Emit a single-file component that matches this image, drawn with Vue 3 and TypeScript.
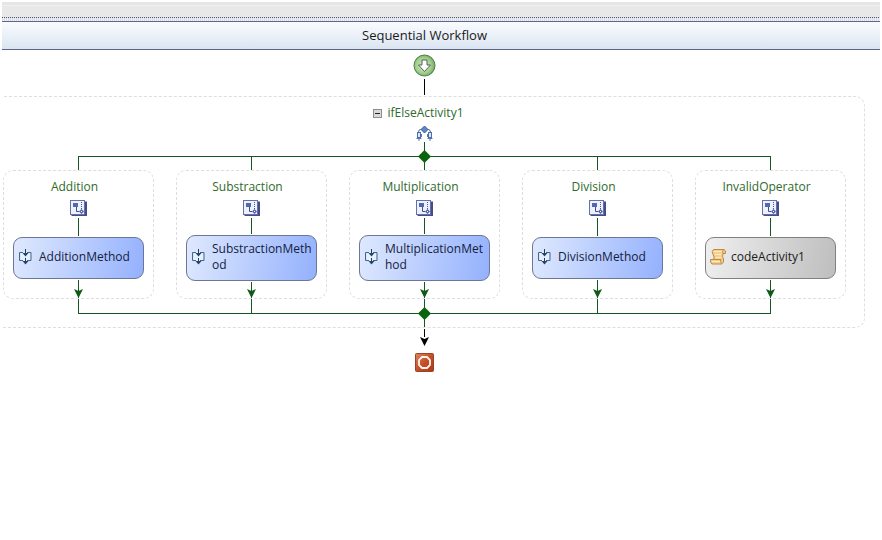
<script setup lang="ts">
import { ref } from 'vue'

interface Branch {
  title: string
  activity: string
  kind: 'method' | 'code'
}

const branches: Branch[] = [
  { title: 'Addition', activity: 'AdditionMethod', kind: 'method' },
  { title: 'Substraction', activity: 'SubstractionMethod', kind: 'method' },
  { title: 'Multiplication', activity: 'MultiplicationMethod', kind: 'method' },
  { title: 'Division', activity: 'DivisionMethod', kind: 'method' },
  { title: 'InvalidOperator', activity: 'codeActivity1', kind: 'code' },
]

const expanded = ref(true)
</script>

<template>
  <div class="designer">
    <div class="strip"></div>
    <div class="perforation"></div>
    <header class="title-bar">
      <h1>Sequential Workflow</h1>
    </header>

    <main class="canvas">
      <svg class="start" width="23" height="23" viewBox="0 0 23 23">
        <defs>
          <radialGradient id="startFill" cx="0.45" cy="0.5" r="0.6">
            <stop offset="0" stop-color="#d2edc0" />
            <stop offset="0.6" stop-color="#a3d08e" />
            <stop offset="1" stop-color="#67985a" />
          </radialGradient>
        </defs>
        <circle cx="11.5" cy="11.5" r="10.5" fill="url(#startFill)" stroke="#4f7d45" />
        <path d="M9 6h5v5h3.5l-6 6.5-6-6.5H9z" fill="#fff" stroke="#55605a" />
      </svg>
      <div class="line entry"></div>

      <section class="frame">
        <div class="label frame-label">
          <button
            type="button"
            class="toggle"
            aria-label="Collapse"
            :aria-expanded="expanded"
            @click="expanded = !expanded"
          >
            <svg width="9" height="9" viewBox="0 0 9 9">
              <rect x="0.5" y="0.5" width="8" height="8" fill="#d9d9d9" stroke="#8c8c8c" />
              <path d="M2 4.5h5" stroke="#222" />
              <path v-if="!expanded" d="M4.5 2v5" stroke="#222" />
            </svg>
          </button>
          <span>ifElseActivity1</span>
        </div>
        <svg class="decision" width="17" height="16" viewBox="0 0 17 16">
          <path d="M6 3.5H4.5q-2 0-2 3M11 3.5h1.5q2 0 2 3" fill="none" stroke="#4a6396" />
          <path d="M8.500 0l3.500 3.500L8.500 7 5 3.500z" fill="#5f86cc" stroke="#3d5c9c" />
          <rect x="1.500" y="6.500" width="3" height="5" fill="#dfe8fa" stroke="#4d6cab" />
          <rect x="12.500" y="6.500" width="3" height="5" fill="#dfe8fa" stroke="#4d6cab" />
          <path d="M3 12v3M14 12v3M0.500 12.500h5M11.500 12.500h5M5.500 8v3M11.500 8v3" stroke="#5f78ab" />
        </svg>
        <div class="line stem"></div>
        <div class="rail">
          <svg class="diamond" width="13" height="13" viewBox="0 0 13 13">
            <path d="M6.500 0l6.500 6.500-6.500 6.500L0 6.500z" fill="#0b640e" />
          </svg>
        </div>

        <div class="branches">
          <div v-for="branch in branches" :key="branch.title" class="branch">
            <div class="line lead"></div>
            <article class="card">
              <h2 class="label">{{ branch.title }}</h2>
              <svg class="branch-icon" width="17" height="16" viewBox="0 0 17 16">
                <path d="M1.500 15h14.500V1.500" fill="none" stroke="#444c8c" stroke-width="2" />
                <rect x="0.500" y="0.500" width="14" height="14" fill="#eef1fc" stroke="#6470ac" />
                <rect x="3" y="3" width="5" height="4" fill="#5069ae" />
                <path d="M6.500 7v4.500H9" fill="none" stroke="#3f5088" />
                <path d="M11.500 2v7" stroke="#46568e" stroke-dasharray="1 1" />
                <path d="M11.500 9l2.500 2.500-2.500 2.500L9 11.500z" fill="#5366a3" />
                <path d="M11 11.500h1" stroke="#fff" />
              </svg>
              <div class="flow">
                <div class="line grow"></div>
                <div class="activity" :class="branch.kind">
                  <svg v-if="branch.kind === 'method'" class="glyph" width="16" height="16" viewBox="0 0 16 16">
                    <path d="M3 3h9v9H3z" fill="#eef8ff" opacity="0.6" />
                    <path d="M5 3.500H1.500v8H5M9 3.500h4v8H9" fill="none" stroke="#46668a" />
                    <path d="M7.500 0v7M7.500 9v6" stroke="#213f5e" />
                    <path d="M4.500 4h6l-3 3.500zM4.500 12h6l-3 3.500z" fill="#234666" />
                  </svg>
                  <svg v-else class="glyph" width="16" height="16" viewBox="0 0 16 16">
                    <path
                      d="M3.500 0.500H14q2 0.500 1.500 4h-2.500q-1 3 0.500 5.500 1 4-2 5H2Q0 13.500 0.500 10.500h3Q5 8 3 5.500 1 2 3.500 0.500z"
                      fill="#f4cf8d"
                      stroke="#bd8a48"
                    />
                    <path d="M4 2.500h8M2 12.500h8M5 5.500h6M6 8.500h5" stroke="#ffe9bd" fill="none" />
                    <path d="M13 4.500q-1-2.500 0.500-4M3.500 10.500h7.500q-1 2 0.500 4" fill="none" stroke="#bd8a48" />
                  </svg>
                  <span class="name">{{ branch.activity }}</span>
                </div>
                <div class="line grow"></div>
                <svg class="head" width="9" height="9" viewBox="0 0 9 9">
                  <path d="M0 0l4.500 2L9 0 4.500 9z" fill="#0e5a16" />
                </svg>
              </div>
            </article>
            <div class="line tail"></div>
          </div>
        </div>

        <div class="rail">
          <svg class="diamond" width="13" height="13" viewBox="0 0 13 13">
            <path d="M6.500 0l6.500 6.500-6.500 6.500L0 6.500z" fill="#0b640e" />
          </svg>
        </div>
        <div class="line exit"></div>
      </section>

      <div class="line final"></div>
      <svg class="head" width="9" height="9" viewBox="0 0 9 9">
        <path d="M0 0l4.500 2L9 0 4.500 9z" fill="#000" />
      </svg>
      <svg class="stop" width="19" height="19" viewBox="0 0 19 19">
        <defs>
          <linearGradient id="stopFill" x1="0" y1="0" x2="1" y2="1">
            <stop offset="0" stop-color="#d98462" />
            <stop offset="0.5" stop-color="#c4502a" />
            <stop offset="1" stop-color="#a83a18" />
          </linearGradient>
        </defs>
        <rect x="0.5" y="0.5" width="18" height="18" rx="1" fill="url(#stopFill)" stroke="#9c4326" />
        <path d="M7 4h5l3 3v5l-3 3H7l-3-3V7z" fill="none" stroke="#fff3ea" stroke-width="1.8" />
      </svg>
    </main>
  </div>
</template>

<style>
body {
  margin: 0;
  background: #fff;
}
</style>

<style scoped>
.designer {
  min-height: 100vh;
  box-sizing: border-box;
  padding: 2px 2px 0;
  font-family: 'Open Sans', 'Noto Sans', sans-serif;
  font-size: 12px;
  line-height: 16px;
  color: #1a1a1a;
}

.strip {
  height: 15px;
  background: linear-gradient(#e6e6e6 3px, #efefef 3px, #efefef 4px, #e8e8e8 4px);
}

.perforation {
  height: 4px;
  background:
    repeating-linear-gradient(90deg, #50566a 0 1px, #e4e6ea 1px 2px) top / 100% 1px no-repeat,
    repeating-linear-gradient(90deg, #d8dcea 0 1px, #eff1f8 1px 2px);
}

.title-bar {
  display: flex;
  justify-content: center;
  padding: 5px 33px 6px 0;
  border-top: 1px solid #5d6688;
  border-bottom: 1px solid #5d6688;
  background: linear-gradient(#fafcfe, #dae5f2);
}

h1,
h2 {
  margin: 0;
  font-weight: 400;
}

h1 {
  font-size: 13px;
  line-height: 16px;
}

.canvas {
  display: flex;
  flex-direction: column;
  align-items: center;
  padding: 4px 33px 16px 0;
  overflow: hidden;
}

.start,
.stop,
.decision,
.branch-icon,
.head,
.glyph {
  display: block;
  flex: none;
}

.line {
  width: 1px;
  flex: none;
  background: #175423;
}

.entry {
  height: 16px;
  margin: 2px 0 1px;
  background: #000;
}

.frame {
  display: flex;
  flex-direction: column;
  align-items: center;
  flex: none;
  padding: 8px 18px 0;
  border: 1px dashed #dedede;
  border-radius: 10px;
}

.label {
  padding-right: 8px;
  font-size: 12px;
  line-height: 16px;
  color: #2f6a2c;
}

.frame-label {
  display: flex;
  align-items: center;
  gap: 5px;
  padding-right: 12px;
  margin-bottom: 5px;
}

.toggle {
  display: block;
  padding: 0;
  border: 0;
  background: none;
  line-height: 0;
}

.stem {
  height: 14px;
}

.rail {
  position: relative;
  align-self: stretch;
  height: 1px;
  margin: 0 75px;
  background: #175423;
}

.diamond {
  position: absolute;
  top: -6px;
  left: calc(50% - 6.5px);
}

.branches {
  display: flex;
  gap: 22px;
}

.branch {
  display: flex;
  flex-direction: column;
  align-items: center;
}

.lead {
  height: 13px;
}

.card {
  display: flex;
  flex-direction: column;
  align-items: center;
  box-sizing: border-box;
  width: 151px;
  padding: 8px 9px 0;
  border: 1px dashed #dedede;
  border-radius: 10px;
}

.branch-icon {
  margin: 5px 0 2px;
}

.flow {
  display: flex;
  flex-direction: column;
  align-items: center;
  width: 100%;
  height: 80px;
}

.flow .head {
  margin-top: -9px;
}

.grow {
  flex: 1 1 0;
}

.activity {
  display: flex;
  align-items: center;
  gap: 5px;
  box-sizing: border-box;
  width: 100%;
  min-height: 42px;
  margin: 1px 0;
  padding: 5px 2px 7px 4px;
  border: 1px solid #6c7796;
  border-radius: 9px;
}

.method {
  background: linear-gradient(100deg, #dfe9fe, #94b1fd);
  color: #14213f;
}

.code {
  border-color: #808080;
  background: linear-gradient(100deg, #efefef, #bebebe);
}

.name {
  overflow-wrap: anywhere;
}

.tail {
  height: 14px;
}

.exit {
  height: 13px;
}

.final {
  height: 8px;
  margin-top: 1px;
  background: #000;
}

.stop {
  margin-top: 7px;
}
</style>
